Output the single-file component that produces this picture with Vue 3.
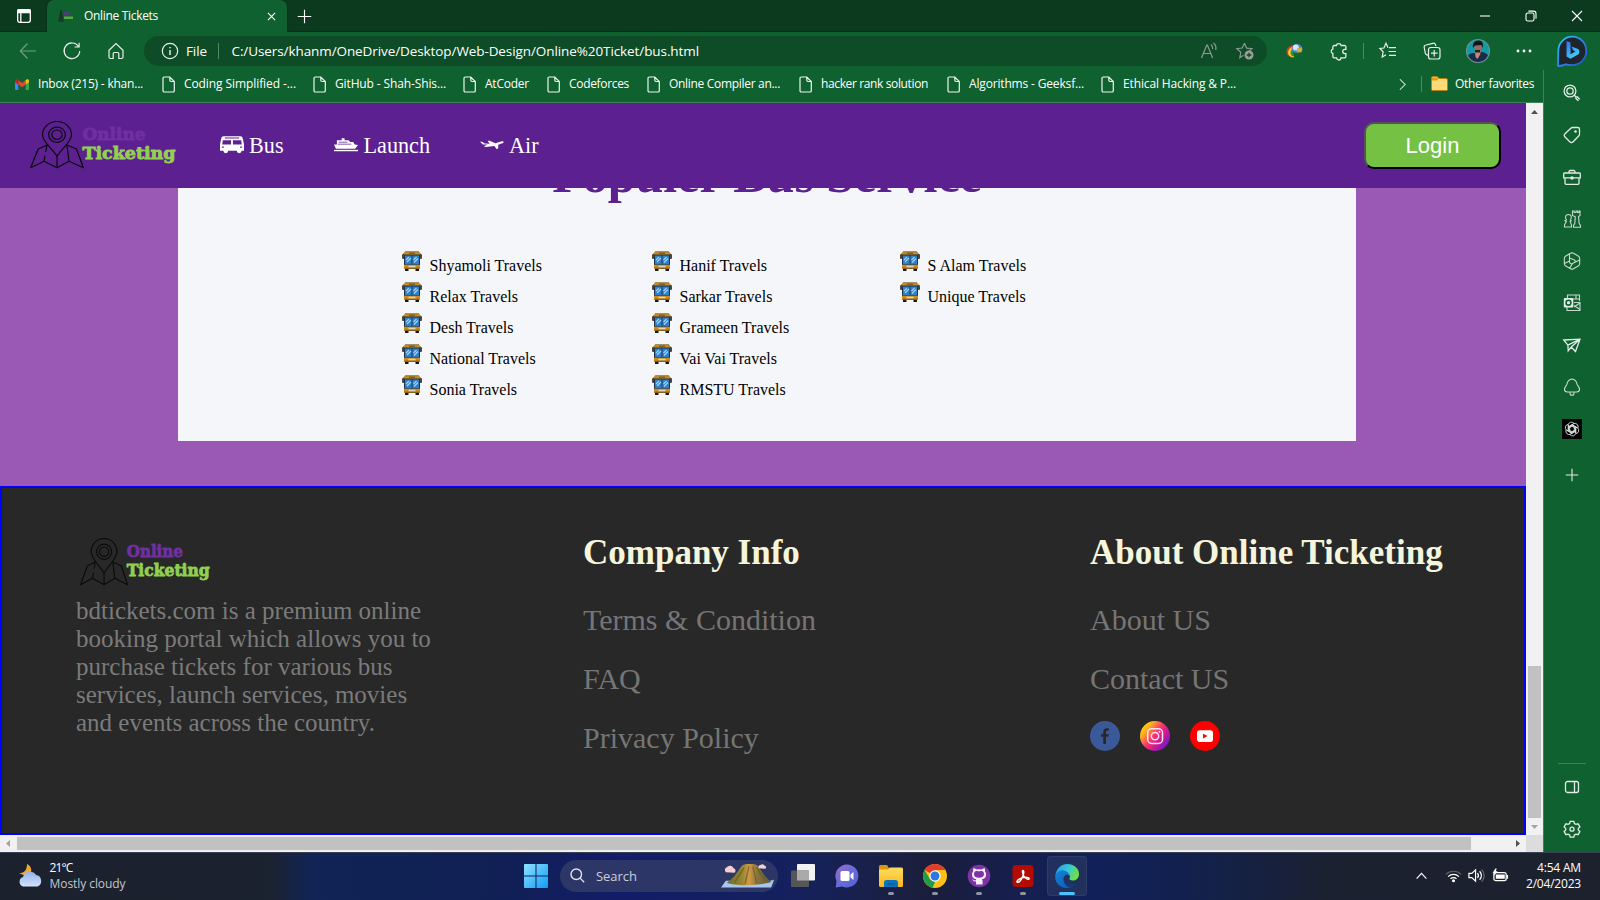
<script setup>
import { nextTick } from 'vue'

// Adjusts letter-spacing so that a label takes up the given width in pixels.
const vFit = {
  mounted(el, { value }) {
    nextTick(() => {
      const natural = el.getBoundingClientRect().width
      const count = el.textContent.length
      el.style.letterSpacing = ((value - natural) / count).toFixed(3) + 'px'
    })
  }
}

const bookmarks = [
  { label: 'Inbox (215) - khan...', width: 105, gmail: true },
  { label: 'Coding Simplified -...', width: 112 },
  { label: 'GitHub - Shah-Shis...', width: 111 },
  { label: 'AtCoder', width: 44 },
  { label: 'Codeforces', width: 60 },
  { label: 'Online Compiler an...', width: 111 },
  { label: 'hacker rank solution', width: 107 },
  { label: 'Algorithms - Geeksf...', width: 115 },
  { label: 'Ethical Hacking & P...', width: 113 }
]

const services = [
  ['Shyamoli Travels', 'Relax Travels', 'Desh Travels', 'National Travels', 'Sonia Travels'],
  ['Hanif Travels', 'Sarkar Travels', 'Grameen Travels', 'Vai Vai Travels', 'RMSTU Travels'],
  ['S Alam Travels', 'Unique Travels']
]
</script>

<template>
  <div class="screen">
    <svg class="defs" width="0" height="0">
      <defs>
        <linearGradient id="insta" x1="0" y1="0.1" x2="1" y2="0.9">
          <stop offset="0" stop-color="#ffe600" /><stop offset=".22" stop-color="#ffb21e" />
          <stop offset=".48" stop-color="#fb2f72" /><stop offset=".7" stop-color="#c2189a" /><stop offset="1" stop-color="#4b1de0" />
        </linearGradient>
        <linearGradient id="win" x1="0" y1="0" x2="1" y2="1"><stop offset="0" stop-color="#8fe3ff" /><stop offset="1" stop-color="#0f9bf5" /></linearGradient>
        <linearGradient id="bing" x1="0" y1="0" x2="1" y2="1"><stop offset="0" stop-color="#2bc8f4" /><stop offset=".5" stop-color="#2a86e8" /><stop offset="1" stop-color="#1c4fd0" /></linearGradient>
        <linearGradient id="bingb" x1="0" y1="0" x2="0.6" y2="1"><stop offset="0" stop-color="#2f6cf0" /><stop offset="1" stop-color="#45d2fa" /></linearGradient>
        <linearGradient id="edge1" x1="0" y1="0" x2="1" y2=".4"><stop offset="0" stop-color="#1d9be8" /><stop offset=".55" stop-color="#35c6d8" /><stop offset="1" stop-color="#6be04a" /></linearGradient>
        <linearGradient id="edge2" x1="0" y1="0" x2=".6" y2="1"><stop offset="0" stop-color="#1684d8" /><stop offset="1" stop-color="#0a62b8" /></linearGradient>
        <linearGradient id="chat" x1="0" y1="0" x2="1" y2="1"><stop offset="0" stop-color="#9a6cc8" /><stop offset=".5" stop-color="#6a6bd8" /><stop offset="1" stop-color="#4f61d6" /></linearGradient>
        <linearGradient id="folder" x1="0" y1="0" x2="0" y2="1"><stop offset="0" stop-color="#ffdc60" /><stop offset="1" stop-color="#fbb91d" /></linearGradient>
        <linearGradient id="hill" x1="0" y1="0" x2="1" y2="0"><stop offset="0" stop-color="#6f6c2a" /><stop offset=".35" stop-color="#9a8530" /><stop offset=".5" stop-color="#d29a45" /><stop offset=".7" stop-color="#8a7038" /><stop offset="1" stop-color="#5b5d35" /></linearGradient>
        <linearGradient id="cloud" x1="0" y1="0" x2="0" y2="1"><stop offset="0" stop-color="#8fb2ef" /><stop offset="1" stop-color="#d4e2fa" /></linearGradient>
      </defs>
    </svg>

    <!-- Tab strip -->
    <header class="tabstrip">
      <svg class="workspace" viewBox="0 0 14 14"><rect x=".7" y=".7" width="12.6" height="12.6" rx="2" /><path class="solid" d="M1 1h12v2.500H1z" /><path d="M3.800 4v9" /></svg>
      <div class="tab">
        <svg class="favicon" viewBox="0 0 16 14"><path d="M3 1 1 12h4zM1 8h4" fill="#173e2b" stroke="#16382a" /><path d="M6 3h6v3H6z" fill="#4a3d78" /><path d="M6 7.500h9v2.500H6z" fill="#58a83f" /></svg>
        <span class="ui"><span v-fit="74">Online Tickets</span></span>
        <svg class="close" viewBox="0 0 10 10"><path d="m1 1 8 8M9 1 1 9" /></svg>
      </div>
      <svg class="plus" viewBox="0 0 16 16"><path d="M8 .8v14.400M.8 8h14.400" /></svg>
      <div class="winctl">
        <svg viewBox="0 0 12 12"><path d="M1 6h10" /></svg>
        <svg viewBox="0 0 12 12"><rect x="1" y="3" width="8" height="8" rx="1.8" /><path d="M3.400 1.100h5A2.600 2.600 0 0 1 11 3.700v5" /></svg>
        <svg viewBox="0 0 12 12"><path d="m1 1 10 10M11 1 1 11" /></svg>
      </div>
    </header>

    <!-- Toolbar -->
    <div class="toolbar">
      <svg class="back" viewBox="0 0 18 18"><path d="M17 9H1.500M8.500 1.500 1.300 9l7.200 7.500" /></svg>
      <svg class="reload" viewBox="0 0 18 18"><path d="M15.500 4.600A7.800 7.800 0 1 0 16.700 9M11.500 5h4.600V.8" /></svg>
      <svg class="home" viewBox="0 0 18 18"><path d="M2 8.200 9 1.600l7 6.600V15a1.500 1.500 0 0 1-1.500 1.500h-2.700v-5a1 1 0 0 0-1-1H7.200a1 1 0 0 0-1 1v5H3.500A1.500 1.500 0 0 1 2 15z" /></svg>
      <div class="address ui">
        <svg class="info" viewBox="0 0 18 18"><circle cx="9" cy="9" r="7.700" /><path d="M9 8v5M9 5v1.300" stroke-width="1.5" /></svg>
        <span class="file"><span v-fit="21">File</span></span>
        <i class="bar"></i>
        <span class="url"><span v-fit="467.500">C:/Users/khanm/OneDrive/Desktop/Web-Design/Online%20Ticket/bus.html</span></span>
        <svg class="read" viewBox="0 0 18 18"><path d="M1.500 16 6.800 3h.6l5.200 13M3.500 11.500h7.200M11 2.500c1.500 1.200 1.800 3 1.600 4.500M13.500 1c2.200 1.700 2.800 4.500 2.200 7" /></svg>
        <svg class="addfav" viewBox="0 0 18 18"><path d="m8.500 1.200 2.100 4.900 5.400.5-3.200 2.800M7.500 13.200l-3.700 2.500 1-5.400-4-3.700 5.400-.6 2.300-4.800" /><circle cx="13" cy="13" r="4.500" fill="#999f9a" stroke="none" /><path d="M13 10.700v4.600M10.700 13h4.600" stroke="#0d4825" stroke-width="1.300" /></svg>
      </div>
      <svg class="idm" viewBox="0 0 17 17"><path d="M8 14.500C3 15 .3 12 .6 8.500 1 4.500 4 2 8 2.500L7 6z" fill="#dd3b22" /><path d="M8 14.300c-4 .2-6-2.300-5.800-5C2.500 6 4.500 4 8 4z" fill="#f3cf2b" /><path d="M8 13.500c-2.500 0-3.700-2-3.500-4C4.700 7.500 6 6 8 6z" fill="#2b9a35" /><circle cx="11" cy="6.200" r="5.400" fill="#5582c8" /><circle cx="9.800" cy="4.500" r="3" fill="#d8e5f2" /><path d="M11 5c2 1 3 0 4.500-1 .8 2 .7 4-.5 6l-4-1z" fill="#d7ae34" /><path d="M6.500 8.500 10 10l6.500-1-8 7.700v-3z" fill="#126b1a" /></svg>
      <svg class="puzzle" viewBox="0 0 17 17"><path d="M6 3.300a2.300 2.300 0 0 1 4.500 0h3.200a1.300 1.300 0 0 1 1.300 1.300v2.300h-1a2 2 0 0 0 0 4h1v2.800a1.300 1.300 0 0 1-1.300 1.300h-3.400a2 2 0 0 1-4 0H4a1.300 1.300 0 0 1-1.300-1.300v-2.800a2.200 2.200 0 0 1 0-4.200V4.600A1.300 1.300 0 0 1 4 3.300z" /></svg>
      <i class="bar"></i>
      <svg class="favs" viewBox="0 0 18 18"><path d="M9 5.800 7 1.300 4.900 6 .9 6.500l3.200 3.300-.9 5.200L7 12.800M10 5.700h7M9.500 9.500H17M10 13.300h7" /></svg>
      <svg class="collect" viewBox="0 0 18 18"><rect x="5.500" y="5.500" width="11.500" height="11.500" rx="2.300" /><path d="M11.200 8v6.500M8 11.200h6.500M5 13.300 3.400 12.600a2 2 0 0 1-1.200-2L1.200 5.500A2.200 2.200 0 0 1 2.900 3l7-1.700a2.200 2.200 0 0 1 2.600 1.600l.3 1.200" /></svg>
      <svg class="avatar" viewBox="0 0 24 24"><circle cx="12" cy="12" r="11.500" fill="#119ca5" /><path d="M1.500 17c2-2.500 4.500-3 7-3l7-1c4 .5 5.500 2 7 4A12 12 0 0 1 1.500 17" fill="#1c2b4c" /><path d="M8.500 6h7l-.5 7-2.500 4-3.500-3z" fill="#9b6a5b" /><path d="M7 9C6 4 9 1.500 12.500 1.500S18 4 16.500 9l-1-3-6.500.5z" fill="#141418" /><path d="m9 13 4-1 1.500 3-3 5-2-2z" fill="#c08a78" /><path d="M9 11h5v2.500H9z" fill="#2a1d1c" /><circle cx="12" cy="12" r="11.500" fill="none" stroke="#6f8f98" /></svg>
      <svg class="more" viewBox="0 0 16 4"><circle cx="2" cy="2" r="1.400" /><circle cx="8" cy="2" r="1.400" /><circle cx="14" cy="2" r="1.400" /></svg>
      <svg class="bingchat" viewBox="0 0 32 32"><path d="M2 31 2.300 16A14 14.300 0 1 1 16 30.200c-2 0-4-.2-6-.8-3 1.300-5 1.500-8 1.600z" fill="#20242c" stroke="url(#bing)" stroke-width="1.800" stroke-linejoin="round" /><path d="m10.500 6 4 1.500v11.800l5-2.800-2.400-1.200-1.600-3.900 6 2.300c2.500 1 2.500 4.300.5 5.800l-7.500 4.300-4-2.300z" fill="url(#bingb)" /></svg>
    </div>

    <div class="body">
      <main class="main">
        <!-- Favorites bar -->
        <div class="bookmarks ui">
          <div v-for="b in bookmarks" :key="b.label" class="bookmark">
            <svg v-if="b.gmail" class="gmail" viewBox="0 0 14 11"><path d="M0 1.500V10a1 1 0 0 0 1 1h2.300V4z" fill="#4285f4" /><path d="M14 1.500V10a1 1 0 0 1-1 1h-2.300V4z" fill="#34a853" /><path d="M3.300 1.200v4.200L7 8.300l3.700-2.900V1.200L7 4.100z" fill="#ea4335" /><path d="M0 1.700v1.500l3.300 2.300V1.200L2.600.5C1.500-.2 0 .4 0 1.700" fill="#c5221f" /><path d="M14 1.700v1.500l-3.300 2.300V1.200l.7-.7c1.100-.7 2.600-.1 2.600 1.200" fill="#fbbc04" /></svg>
            <svg v-else class="page" viewBox="0 0 13 17"><path d="M2.300 1h5.500l4.500 4.500v9.200a1.300 1.300 0 0 1-1.300 1.300H2.300A1.300 1.300 0 0 1 1 14.700V2.300A1.300 1.300 0 0 1 2.300 1zM7.800 1v3.300a1.200 1.200 0 0 0 1.200 1.200h3.300" /></svg>
            <span><span v-fit="b.width">{{ b.label }}</span></span>
          </div>
          <svg class="chev" viewBox="0 0 8 14"><path d="m1 1 6 6-6 6" /></svg>
          <i class="bar"></i>
          <svg class="dir" viewBox="0 0 17 15"><path d="M.5 2A1.500 1.500 0 0 1 2 .5h4L8 2.500h7A1.500 1.500 0 0 1 16.500 4v9.500a1 1 0 0 1-1 1h-14a1 1 0 0 1-1-1z" fill="#ffd978" stroke="#b4830d" /><path d="M1 1.500h5L7.500 3 6 4.500H1z" fill="#d9a116" /></svg>
          <span class="other"><span v-fit="79">Other favorites</span></span>
        </div>

        <!-- Web page -->
        <div class="viewport">
          <div class="page-area">
            <nav class="nav">
              <svg class="brand brand-nav" viewBox="0 0 147 48" preserveAspectRatio="none">
                <g class="brand-lines"><path d="M27 35.300C22 27 12.500 21 12.500 13.700a14.500 13.200 0 0 1 29 0C41.500 21 32 27 27 35.300z" /><ellipse cx="27" cy="13.700" rx="8.400" ry="7.600" /><ellipse cx="27" cy="13.700" rx="5.200" ry="4.700" /><path d="M17 24 8.200 28 .6 46.700 14 40.200l13 6.500 12-6.500 14.400 6.500L46.500 28l-9.600-4M27 35.300v11.400M14 40.200l1-5.500M15.700 31l1.300-7M39 40.200 36.900 24" /></g>
                <text class="brand-a" x="52.500" y="18.500" textLength="63" lengthAdjust="spacingAndGlyphs">Online</text>
                <text class="brand-b" x="52.500" y="38.300" textLength="93" lengthAdjust="spacingAndGlyphs">Ticketing</text>
              </svg>
              <a class="link bus"><svg viewBox="0 0 25 17"><path fill-rule="evenodd" d="M4 0h17c2 0 2.600 1.200 3 3.500l1 5v6.500h-2.500a2.500 2.500 0 0 1-5 0h-9a2.500 2.500 0 0 1-5 0H0V8.500l1-5C1.400 1.200 2 0 4 0M3 4 2.300 8.500h9.200V4zm10.500 0v4.500h9.200L22 4zM5 1.300v1h15v-1zM2 10.500V12h2v-1.500zm19 0V12h2v-1.500z" /></svg>Bus</a>
              <a class="link launch"><svg viewBox="0 0 25 14"><path d="M3 2h5V0h3v2h4l2 2h3l1.500 2.500L25 7l-3 4H2L0 6.500h3z" /><path d="M0 12h25v1.500H0z" /><path class="hole" d="M5 3.500h9v1H5zM4 5.800h14v.8H4z" /></svg>Launch</a>
              <a class="link air"><svg viewBox="0 0 25 10"><path d="M0 1.500h2l3 2 5 .2L8 .7h2l6 2.500 6-1.900c2.500-.5 3.500.6 2 1.700L19 4.700V8.500l-1.500.8L15 6 6 7l-2-.6 4-1.900L3 4.500z" /></svg>Air</a>
              <button class="login">Login</button>
            </nav>

            <section class="services">
              <div class="card">
                <h1>Populer Bus Service</h1>
                <div class="lists">
                  <ul v-for="(list, i) in services" :key="i">
                    <li v-for="name in list" :key="name">
                      <svg viewBox="0 0 20 20"><path d="M1.500 2h17v4h-1.500V3.500H3V6H1z" fill="#6b5a38" /><rect x="0" y="3" width="2.500" height="5" rx="1" fill="#4f4634" /><rect x="17.500" y="3" width="2.500" height="5" rx="1" fill="#4f4634" /><rect x="3" y="17" width="3.500" height="3" rx=".5" fill="#16171a" /><rect x="13.500" y="17" width="3.500" height="3" rx=".5" fill="#16171a" /><rect x="2" y=".5" width="16" height="17.500" rx="1.500" fill="#d08a17" /><path d="M3 .3h14v1H3z" fill="#8d7a55" /><rect x="7" y="1.600" width="6" height="1.200" fill="#6f5a1d" /><path d="M2 3.500h16v10.200H2z" fill="#1b3350" /><path d="M3 4.500h6.600v8.700H3zM10.400 4.500H17v8.700h-6.600z" fill="#2d7fc8" /><path d="m4 9 3-3M5 11l4-4M11.500 9l3-3M12 11.500l4-4" stroke="#a6d5fa" stroke-width="1.100" /><path d="M6.500 14.700h7v1.800h-7z" fill="#ddd5be" /><path d="M2.500 16.700h15v1.300h-15z" fill="#8a5d13" /></svg>
                      <span>{{ name }}</span>
                    </li>
                  </ul>
                </div>
              </div>
            </section>

            <footer class="footer">
              <div class="about">
                <svg class="brand brand-footer" viewBox="0 0 147 48" preserveAspectRatio="none">
                  <g class="brand-lines"><path d="M27 35.300C22 27 12.500 21 12.500 13.700a14.500 13.200 0 0 1 29 0C41.500 21 32 27 27 35.300z" /><ellipse cx="27" cy="13.700" rx="8.400" ry="7.600" /><ellipse cx="27" cy="13.700" rx="5.200" ry="4.700" /><path d="M17 24 8.200 28 .6 46.700 14 40.200l13 6.500 12-6.500 14.400 6.500L46.500 28l-9.600-4M27 35.300v11.400M14 40.200l1-5.500M15.700 31l1.300-7M39 40.200 36.900 24" /></g>
                  <text class="brand-a" x="52.500" y="19.300" textLength="63" lengthAdjust="spacingAndGlyphs">Online</text>
                  <text class="brand-b" x="52.500" y="38.500" textLength="93" lengthAdjust="spacingAndGlyphs">Ticketing</text>
                </svg>
                <p>bdtickets.com is a premium online booking portal which allows you to purchase tickets for various bus services, launch services, movies and events across the country.</p>
              </div>
              <div class="col">
                <h2>Company Info</h2>
                <a>Terms &amp; Condition</a>
                <a>FAQ</a>
                <a>Privacy Policy</a>
              </div>
              <div class="col">
                <h2>About Online Ticketing</h2>
                <a>About US</a>
                <a>Contact US</a>
                <div class="social">
                  <svg viewBox="0 0 30 30"><circle cx="15" cy="15" r="15" fill="#3b5998" /><path d="M13.300 23v-7.300h-2.300v-2.500h2.300v-2.200c0-2.500 1.500-3.700 3.600-3.700l2 .1v2h-1.400c-1.100 0-1.500.6-1.500 1.400v2.400h2.800l-.3 2.500H16V23z" fill="#282828" /></svg>
                  <svg viewBox="0 0 30 30"><circle cx="15" cy="15" r="15" fill="url(#insta)" /><g fill="none" stroke="#ffe1f0" stroke-width="1.500"><rect x="7.700" y="7.700" width="14.800" height="14.800" rx="4" /><circle cx="15" cy="15.100" r="3.700" /></g><circle cx="19.500" cy="10.700" r="1" fill="#ffe1f0" /></svg>
                  <svg viewBox="0 0 30 30"><circle cx="15" cy="15" r="15" fill="#f00" /><rect x="7" y="9.200" width="16" height="11.800" rx="2.800" fill="#fff" /><path d="m13 12.700 4.500 2.300-4.500 2.400z" fill="#f00" /></svg>
                </div>
              </div>
            </footer>
          </div>
          <div class="vscroll">
            <svg viewBox="0 0 7 4"><path d="M0 4 3.500 0 7 4z" fill="#505050" /></svg>
            <div class="thumb"></div>
            <svg viewBox="0 0 7 4"><path d="M0 0h7L3.500 4z" fill="#a3a3a3" /></svg>
          </div>
        </div>
        <div class="hscroll">
          <svg viewBox="0 0 4 7"><path d="M4 0v7L0 3.500z" fill="#a3a3a3" /></svg>
          <div class="thumb"></div>
          <svg viewBox="0 0 4 7"><path d="M0 0v7l4-3.500z" fill="#505050" /></svg>
          <div class="corner"></div>
        </div>
      </main>

      <aside class="sidebar">
        <svg viewBox="0 0 18 18"><circle cx="7" cy="7" r="5.900" /><circle cx="7" cy="7" r="3.200" /><path d="m11.300 11.300 4.200 4.200" /><path d="m13 13 3 3" stroke-width="3.200" /><path d="m13.700 13.700 2 2" stroke="#106130" stroke-width="1" /></svg>
        <svg viewBox="0 0 18 18"><path d="M9.500 1.500h5.200a1.800 1.800 0 0 1 1.800 1.800v5a2 2 0 0 1-.6 1.500l-6 6.200a2 2 0 0 1-2.900 0L1.800 10.800a2 2 0 0 1 0-2.800l6-5.800a2.300 2.300 0 0 1 1.700-.7z" /><circle class="dot" cx="12.500" cy="5.500" r="1.300" /></svg>
        <svg viewBox="0 0 18 18"><path d="M6 5V3.700a1.200 1.200 0 0 1 1.200-1.200h3.600A1.200 1.200 0 0 1 12 3.700V5M1.500 5h15a.8.8 0 0 1 .8.8v4H.7v-4a.8.8 0 0 1 .8-.8zM2 10v5.300a1 1 0 0 0 1 1h12a1 1 0 0 0 1-1V10M5 9.800h8" /><circle class="dot" cx="9" cy="10" r="1.700" /></svg>
        <svg class="thin" viewBox="0 0 18 18"><path d="M3.800 9.800a2.900 2.900 0 1 1 3.200 0M7 9.800l1.200 1-1 .7 1.300 3.500v2H1.500v-2l1.800-3.500-1.300-.7 1.800-1M9.500 1h1.700v1.500H13V1h1.500v1.500H16V1h1v4.500l-1.500 1.300.7 6.700 1.300 2v1.700H10.500v-1.700l1.300-2L12.300 6.800 9.500 5.500z" /></svg>
        <svg class="thin" viewBox="0 0 18 18"><path d="M7.500 1.300a3 3 0 0 1 3 0l4.700 2.700a3 3 0 0 1 1.500 2.600v4.800a3 3 0 0 1-1.500 2.600l-4.700 2.700a3 3 0 0 1-3 0L2.800 14a3 3 0 0 1-1.500-2.600V6.600A3 3 0 0 1 2.800 4zM6.500 2.200v7.600a2 2 0 0 0 2.900 1.800L16.500 8M6.500 6l5 2a1.500 1.500 0 0 1 0 2.500M1.500 11.500 6.500 9M9.500 11.500 6.500 16.500" /></svg>
        <svg class="thin" viewBox="0 0 18 18"><path d="M4.500 4V1h12v6M13 1v4M9 5h7.500M11 8.500h6v8H4V13" /><rect class="dot" x=".8" y="4" width="9.500" height="9.500" rx="1" /><circle cx="5.500" cy="8.700" r="2.400" fill="none" stroke="#106130" stroke-width="1.600" /><path d="m11 11.500 6 4M17 9l-6 4" /></svg>
        <svg viewBox="0 0 18 18"><path d="M.8 4 17 3.200 12.500 15.500 8.200 11l-3 3.800-.3-5.600zM17 3.200 4.900 9.200M17 3.200 8.200 11" /></svg>
        <svg class="thin" viewBox="0 0 18 18"><path d="M9 1C6 1.500 4.500 3.500 4 6c-.3 1.500-2.500 3-2.500 5.300A2.700 2.700 0 0 0 4.200 14h9.600a2.700 2.700 0 0 0 2.700-2.700C16.500 9 14.300 7.500 14 6c-.5-2.500-2-4.500-5-5zM7 14v1.200a2 2 0 0 0 4 0V14" /></svg>
        <svg class="gpt" viewBox="0 0 20 20"><rect width="20" height="20" /><path v-for="n in 6" :key="n" d="M6.200 5.800A3.300 3.300 0 0 1 12 4.300M6.200 5.800v5.400l3.800 2.200M7.700 11V7.200l4-2.300" :transform="`rotate(${n * 60} 10 10)`" /></svg>
        <svg class="add" viewBox="0 0 14 14"><path d="M7 .8v12.400M.8 7h12.400" /></svg>
        <hr>
        <svg class="small" viewBox="0 0 16 16"><rect x="1.500" y="2.500" width="13" height="11" rx="2" /><path d="M10.500 2.500v11" /></svg>
        <svg class="gear" viewBox="0 0 18 18"><path d="M7.200 1.300h3.600l.6 2.200 1.500.9 2.200-.6 1.800 3-1.600 1.600v1.600l1.600 1.700-1.800 3-2.200-.6-1.500.9-.6 2.200H7.200l-.6-2.200-1.500-.9-2.200.6-1.800-3 1.600-1.700V8.400L1.100 6.800l1.800-3 2.200.6 1.500-.9z" /><circle cx="9" cy="9.200" r="2" /></svg>
      </aside>
    </div>

    <!-- Taskbar -->
    <div class="taskbar ui">
      <svg class="weather" viewBox="0 0 25 25"><path d="M9 1c5 2 6 9 1 13L1 10c4 .5 8-2 8-9" fill="#f5a828" /><path d="M5 23.500a5 5 0 0 1 0-9.500 7.200 7.200 0 0 1 13-2 6 6 0 0 1 1.500 11.500z" fill="url(#cloud)" /></svg>
      <div class="forecast"><span><b v-fit="23">21°C</b></span><span class="dim"><b v-fit="76">Mostly cloudy</b></span></div>
      <svg class="start" viewBox="0 0 24 24"><path d="M0 1a1 1 0 0 1 1-1h10.500v11.500H0zM12.500 0H23a1 1 0 0 1 1 1v10.500H12.500zM0 12.500h11.500V24H1a1 1 0 0 1-1-1zM12.500 12.500H24V23a1 1 0 0 1-1 1H12.500z" fill="url(#win)" /></svg>
      <div class="search">
        <svg class="lens" viewBox="0 0 16 16"><circle cx="6.700" cy="6.700" r="5.600" /><path d="m10.800 10.800 4.300 4.300" /></svg>
        <span><b v-fit="41">Search</b></span>
        <svg class="volcano" viewBox="0 0 56 26"><path d="m0 25 5-7h46l4-1-3 8z" fill="#a9c6ee" /><path d="M6 20C16 13 18 6 22 2c3-2 13-2 16 0 4 5 6 11 14 17-8 4-38 5-46 1" fill="url(#hill)" /><path d="M24 4 14 20M29 3l-4 18M33 3l4 18M37 4l9 14" stroke="#56602b" stroke-width="1.500" fill="none" opacity=".65" /><path d="M5 9a3 3 0 0 1 1-5 4 4 0 0 1 7 1 2.500 2.500 0 0 1 1 4.500zM39 5a2.500 2.500 0 0 1 2-3.500 3 3 0 0 1 4 .5 2 2 0 0 1 1 3.500z" fill="#f6cfd0" /></svg>
      </div>
      <div class="app"><svg viewBox="0 0 24 24"><rect x="6" y="0" width="18" height="16.500" rx="1" fill="#f2f2f2" /><rect x="0" y="6.500" width="18" height="16.500" rx="1" fill="#565656" /><path d="M6 6.500h12v10H6z" fill="#aaa" /></svg></div>
      <div class="app"><svg viewBox="0 0 24 24"><path d="M12 .5A11.500 11.500 0 1 1 7 22.400L.8 23.500 1.500 17A11.500 11.500 0 0 1 12 .5" fill="url(#chat)" /><rect x="5.500" y="7" width="9" height="10" rx="1.500" fill="#fff" /><path d="m15.500 10.500 3-2.500v8l-3-2.500z" fill="#fff" /></svg></div>
      <div class="app run"><svg viewBox="0 0 24 24"><path d="M0 2.500A1.500 1.500 0 0 1 1.500 1H8l2 3h10v4H0z" fill="#dc970d" /><path d="M0 5.500h9l2-2h11.500A1.500 1.500 0 0 1 24 5v16.500a1.500 1.500 0 0 1-1.500 1.500h-21A1.500 1.500 0 0 1 0 21.500z" fill="url(#folder)" /><path d="M5 23v-4.500a2.500 2.500 0 0 1 2.500-2.500h9a2.500 2.500 0 0 1 2.500 2.500V23z" fill="#0d72bd" /><path d="M8 19.500h8v1H8z" fill="#0a508a" /></svg></div>
      <div class="app run"><svg viewBox="0 0 24 24"><circle cx="12" cy="12" r="12" fill="#fbc116" /><path d="M12 12 1.600 6A12 12 0 0 1 22.400 6H12z" fill="#e33b2e" /><path d="M1.600 6 7 15l5 3-2.500 5.700A12 12 0 0 1 1.600 6" fill="#229a48" /><circle cx="12" cy="12" r="5.700" fill="#fff" /><circle cx="12" cy="12" r="4.500" fill="#2a78e4" /></svg></div>
      <div class="app run"><svg viewBox="0 0 24 24"><circle cx="12" cy="12" r="11.300" fill="#7d33a3" /><path d="M9 20.500v-3c-2.500.5-3-1.300-4-2 1.800-.5 2 1.200 3.500 1.100l.8-1.300c-3-.5-4.300-2-4.300-4.900 0-1.200.4-2.300 1.200-3.100-.3-1-.2-2.100.3-3.100 1.200 0 2.300.7 3.100 1.300a10 10 0 0 1 5 0c.8-.6 1.900-1.300 3.100-1.300.4 1 .5 2.100.2 3.100.8.8 1.200 1.900 1.200 3.100 0 2.900-1.300 4.400-4.300 4.900.6.500.8 1.200.8 2.200v3z" fill="#f7effa" /><path d="M12 7.500c3-1 5-.5 5 2.800 0 2.500-2 3.500-5 3.500s-5-1-5-3.500c0-3.300 2-3.800 5-2.800" fill="#7d33a3" /></svg></div>
      <div class="app run"><svg viewBox="0 0 24 24"><rect x="1.500" y="1" width="21" height="22" rx="3.500" fill="#b30b00" /><path d="M6 17.500c.5-2 5-4.200 8-4.300 3 0 4.500.7 4 1.700-1 1.200-4-.8-5.500-3.400-1-2-1.400-5-.5-5s1 2.200.2 4.500c-1 3-3 6.600-4.700 7.200-1 .3-1.700 0-1.500-.7z" fill="none" stroke="#fff" stroke-width="1.500" /></svg></div>
      <div class="app active"><svg viewBox="0 0 24 24"><path d="M.5 11C1.500 4.500 6 0 12.500 0 19 0 24 4.500 24 10c0 4-2.500 6.500-6 6.500-2.500 0-4-1-3.500-2 1.500-2.500-.5-5.500-4-5.500C6 9 1.500 12 .5 11" fill="url(#edge1)" /><path d="M.4 11C2 7 6 5.500 9.500 6.500c3 .8 5 3.500 5 6-1-2-3.500-2.300-5-.5-2 3 0 8 4 9.500 2 .6 3.500.3 5-.3-1.500 1.700-4 2.800-6.500 2.800C4.500 24-.8 18 .4 11" fill="url(#edge2)" /><path d="M9.500 12c-2 4 1 8.500 6 8.500 3 0 5-.8 7-2.700-1.500 3.200-4.500 5.300-7.500 5.700-5-.5-8.500-8-5.500-11.500" fill="#123d78" /></svg></div>
      <div class="tray">
        <svg class="up" viewBox="0 0 14 9"><path d="m1.500 7.500 5.500-6 5.500 6" /></svg>
        <svg class="wifi" viewBox="0 0 18 14"><path d="M1 5.300a11.300 11.300 0 0 1 16 0" opacity=".3" /><path d="M3.300 7.600a8 8 0 0 1 11.400 0M5.800 10a4.500 4.500 0 0 1 6.400 0" /><circle class="dot" cx="9" cy="12" r="1.600" /></svg>
        <svg class="vol" viewBox="0 0 18 15"><path d="M1 5.200h3l4-3.700v12L4 9.800H1zM10 5c1.300 1.500 1.300 3.500 0 5M12.300 3c2.300 2.700 2.300 6.300 0 9" /><path d="M14.500 1c3.200 4 3.200 9 0 13" opacity=".3" /></svg>
        <svg class="batt" viewBox="0 0 18 15"><rect x="2" y="4.500" width="13" height="8.500" rx="2" /><path class="dot" d="M4 6.500h9.500V11H4zM15.500 7H17v4h-1.500z" /><path class="dot" d="m3.500 0-3 5h2L2 8l4-5H4l1-3z" /></svg>
      </div>
      <div class="clock"><span><b v-fit="44">4:54 AM</b></span><span><b v-fit="55">2/04/2023</b></span></div>
    </div>
  </div>
</template>

<style>
html, body { margin: 0; background: #106130; overflow: hidden; }
</style>

<style scoped>
.screen { width: 1600px; height: 900px; display: flex; flex-direction: column; overflow: hidden; font-family: "Liberation Serif", "Times New Roman", serif; }
.defs { position: absolute; }
.ui { font-family: "Open Sans", "Noto Sans", sans-serif; font-size: 12px; color: #fff; white-space: nowrap; }
svg { display: block; flex: none; fill: none; stroke: none; overflow: visible; }
b { font-weight: 400; }
.bar { width: 1px; background: #4f8a65; flex: none; }

.tabstrip { height: 32px; flex: none; display: flex; align-items: center; background: #0b3a1e; box-shadow: inset 0 -1px #093018; }
.tabstrip svg { stroke: #fff; stroke-width: 1.3; }
.workspace { width: 14px; height: 14px; margin: 0 16px 0 17px; }
.workspace .solid { fill: #fff; }
.tab { width: 240px; height: 32px; border-radius: 7px 7px 0 0; background: #106130; display: flex; align-items: center; box-shadow: 0 0 2px #072713; }
.tabstrip .favicon { width: 16px; height: 14px; margin-left: 11px; stroke: none; }
.tab .ui { width: 183px; margin-left: 10px; line-height: 32px; }
.tab .close { width: 9px; height: 9px; }
.tabstrip .plus { width: 15px; height: 15px; margin-left: 10px; stroke-width: 1.2; }
.winctl { display: flex; gap: 34px; margin-left: auto; margin-right: 17px; }
.winctl svg { width: 12px; height: 12px; stroke-width: 1.1; }

.toolbar { height: 38px; flex: none; display: flex; align-items: center; background: #106130; position: relative; z-index: 2; }
.toolbar > svg, .address svg { stroke: #e8f0ea; stroke-width: 1.2; width: 18px; height: 18px; }
.toolbar .back { margin-left: 19px; stroke: #6d9f80; }
.toolbar .reload { margin-left: 26px; }
.toolbar .home { margin-left: 26px; }
.address { width: 1123px; height: 30px; margin-left: 19px; border-radius: 15px; background: #0d4c26; display: flex; align-items: center; font-size: 13.5px; }
.address .info { margin-left: 17px; }
.file { width: 32px; margin-left: 7px; }
.address .bar { height: 16px; }
.url { width: 968px; margin-left: 12.5px; }
.address .read, .address .addfav { stroke: #8c9a90; }
.address .addfav { margin-left: 18px; }
.toolbar .idm { width: 17px; height: 17px; margin-left: 19px; stroke: none; }
.toolbar .puzzle { margin-left: 27px; }
.toolbar > .bar { height: 16px; margin-left: 15px; }
.toolbar .favs { margin-left: 15px; }
.toolbar .collect { margin-left: 26px; }
.toolbar .avatar { width: 24px; height: 24px; margin-left: 24.5px; stroke: none; }
.toolbar .more { width: 16px; height: 4px; margin-left: 26px; fill: #fff; stroke: none; }
.toolbar .bingchat { width: 32px; height: 32px; margin-left: 24px; stroke: none; }

.body { height: 782px; flex: none; display: flex; }
.main { width: 1543px; display: flex; flex-direction: column; }
.bookmarks { height: 32px; border-bottom: 1px solid #3f8159; background: #106130; display: grid; grid-template-columns: 147px 151px 150px 84px 100px 152px 148px 154px 298px 22px 10px 24px auto; padding-left: 15px; align-items: center; box-sizing: content-box; }
.bookmark { display: flex; align-items: center; height: 28px; margin-top: -4px; }
.bookmark > span { margin-left: 9px; line-height: 16px; }
.bookmark .page { width: 13px; height: 17px; stroke: #eef5f0; stroke-width: 1.2; }
.bookmark .gmail { width: 14px; height: 11px; }
.bookmarks .chev { width: 7px; height: 13px; stroke: #e0ebe4; stroke-width: 1.2; margin-top: -4px; }
.bookmarks > .bar { height: 16px; margin-top: -4px; }
.bookmarks .dir { width: 17px; height: 15px; margin-top: -5px; }
.other { margin-top: -6px; }

.viewport { height: 732px; display: flex; }
.page-area { width: 1526px; height: 732px; background: #9b59b6; display: flex; flex-direction: column; overflow: hidden; }
.nav { height: 85px; flex: none; background: #5c2090; display: flex; align-items: center; position: relative; z-index: 1; }
.brand { height: 48px; }
.brand-nav { width: 147px; margin-left: 30px; margin-top: -2px; }
.brand-footer { width: 131px; margin-left: 4px; }
.brand-lines { stroke: #0a0a0a; stroke-width: 1.2; stroke-linejoin: round; }
.brand text { font-family: "DejaVu Serif", serif; font-weight: 700; font-size: 16px; stroke-width: .8; }
.brand-a { fill: #7030a0; stroke: #7030a0; }
.brand-b { fill: #92d050; stroke: #92d050; }
.link { display: flex; align-items: center; color: #fff; font-size: 22.2px; line-height: 26px; white-space: nowrap; }
.link svg { fill: #fff; width: 24px; margin-right: 5px; margin-top: -2px; }
.link .hole { fill: #5c2090; }
.bus { margin-left: 43px; width: 114px; }
.launch { width: 146px; }
.launch svg { margin-right: 5.5px; }
.bus svg { height: 17px; }
.launch svg { height: 14px; }
.air svg { height: 10px; }
.login { width: 137px; height: 47px; margin-left: auto; margin-right: 25px; padding: 0; border: 2px outset #000; border-radius: 10px; background: #74c144; color: #fff; font: 22px "Liberation Sans", Arial, sans-serif; }

.services { height: 298px; flex: none; }
.card { width: 1178px; height: 253px; margin-left: 178px; background: #f5f6fa; overflow: hidden; }
h1 { margin: -42px 0 0; text-align: center; font-size: 50px; line-height: 58px; color: #5c2090; white-space: nowrap; }
.lists { display: flex; margin: 44px 0 0 223.5px; }
ul { list-style: none; margin: 0; padding: 0; width: 250px; }
ul:nth-child(2) { width: 248px; }
li { height: 31px; display: flex; align-items: flex-start; font-size: 16px; line-height: 20px; color: #000; }
li svg { width: 20px; height: 20px; margin: 3px 8px 0 0; }
li span { margin-top: 8px; }

.footer { height: 349px; flex: none; box-sizing: border-box; border: 2px solid #00f; background: #282828; display: grid; grid-template-columns: 507px 507px 1fr; padding: 0 0 0 74px; }
.about { padding-top: 50px; }
.about p { margin: 11px 0 0; width: 365px; font-size: 25px; line-height: 28px; color: #7b7b7b; }
h2 { margin: 45px 0 0; font-size: 35px; line-height: 40px; color: #f5f5dc; white-space: nowrap; }
.col a { display: block; margin-top: 25px; font-size: 30px; line-height: 34px; color: #757575; }
.col h2 + a { margin-top: 30px; }
.social { display: flex; gap: 20px; margin-top: 25px; }
.social svg { width: 30px; height: 30px; }

.vscroll { width: 17px; background: #f1f1f1; display: flex; flex-direction: column; align-items: center; }
.vscroll svg { width: 7px; height: 4px; margin-top: 7px; }
.vscroll .thumb { width: 13px; height: 152px; margin-top: 552px; background: #c1c1c1; }
.hscroll { height: 17px; background: #f1f1f1; display: flex; align-items: center; }
.hscroll svg { width: 4px; height: 7px; margin-left: 6px; }
.hscroll .thumb { width: 1454px; height: 13px; margin-left: 7px; background: #c1c1c1; }
.hscroll .thumb + svg { margin-left: 45px; }
.corner { width: 17px; height: 17px; margin-left: auto; background: #dcdcdc; }

.sidebar { width: 57px; border-left: 1px solid #3f8159; background: #106130; display: flex; flex-direction: column; align-items: center; padding-top: 14px; box-sizing: border-box; }
.sidebar svg { width: 18px; height: 18px; margin-bottom: 24px; stroke: #e2ece5; stroke-width: 1.3; }
.sidebar .thin { stroke-width: 1.1; stroke: #c6d8cc; }
.sidebar .dot { fill: #e2ece5; stroke: none; }
.sidebar .gpt { width: 20px; height: 20px; margin: -1px 0 29px; stroke-width: .8; }
.gpt rect { fill: #000; stroke: none; }
.sidebar .add { width: 14px; height: 14px; margin: 0; stroke-width: 1.1; }
hr { width: 28px; height: 1px; margin: 281px 0 0; border: 0; background: #3f8159; flex: none; }
.sidebar .small { width: 16px; height: 16px; margin: 15px 0 25px; }
.sidebar .gear { margin: 0; }

.taskbar { height: 48px; flex: none; box-sizing: border-box; border-top: 1px solid #3b4154; padding-bottom: 2px; display: flex; align-items: center; background: linear-gradient(90deg, #1b212d 0, #1b222f 270px, #112455 310px, #101f54 500px, #131d68 620px, #14215c 800px, #1b2042 900px, #1a1d3b 930px, #12205a 1080px, #11204f 1180px, #1b2130 1330px, #1c212d 1600px); }
.weather { width: 25px; height: 25px; margin-left: 18px; }
.forecast { width: 473px; margin-left: 6.5px; }
.forecast span, .clock span { display: block; line-height: 16px; }
.dim { color: #c3c6cc; }
.start { width: 24px; height: 24px; margin-left: 1px; }
.search { width: 218px; height: 32px; margin-left: 12.5px; margin-right: 2px; border-radius: 16px; background: #2d3767; display: flex; align-items: center; font-size: 13px; color: #c9cede; }
.lens { width: 15px; height: 15px; margin-left: 10px; stroke: #dfe3ef; stroke-width: 1.5; }
.search span { width: 125px; margin-left: 11px; }
.volcano { width: 54px; height: 26px; }
.app { width: 40px; height: 40px; margin-left: 4px; border-radius: 4px; display: flex; align-items: center; justify-content: center; position: relative; }
.search + .app { margin-left: 3px; }
.app svg { width: 24px; height: 24px; }
.app.run::after, .app.active::after { content: ""; position: absolute; bottom: 1px; left: 17px; width: 6px; height: 3px; border-radius: 2px; background: #8f95a3; }
.app.active { background: #22305e; box-shadow: inset 0 0 0 1px #303c68; }
.app.active::after { left: 12px; width: 16px; background: #4cc2ff; }
.tray { display: flex; align-items: center; margin-left: auto; }
.tray svg { stroke: #fff; stroke-width: 1.3; }
.tray .dot { fill: #fff; stroke: none; }
.up { width: 13px; height: 8px; margin-right: 17px; }
.wifi { width: 17px; height: 14px; margin-right: 6px; }
.vol { width: 17px; height: 15px; margin-right: 7px; }
.batt { width: 17px; height: 15px; }
.clock { width: 72px; margin-right: 19px; text-align: right; }
</style>
